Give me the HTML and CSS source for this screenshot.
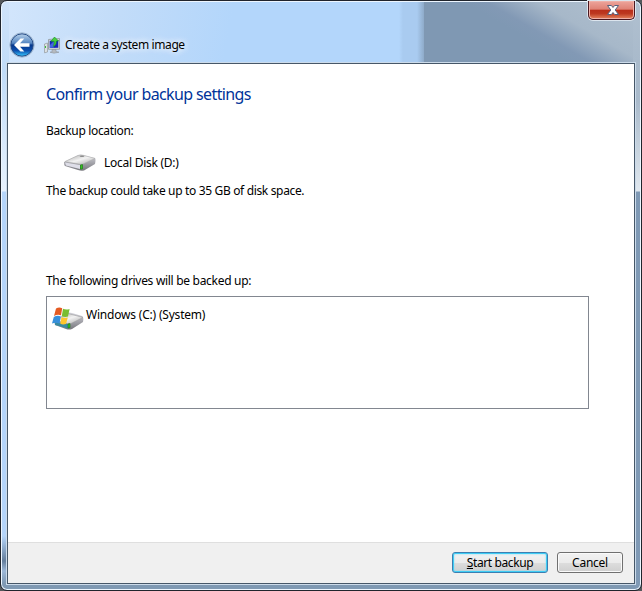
FILE: index.html
```html
<!DOCTYPE html>
<html lang="en">
<head>
<meta charset="utf-8">
<title>Create a system image</title>
<link rel="stylesheet" href="styles.css">
</head>
<body>
<div class="window">
  <header class="titlebar">
    <button class="close" aria-label="Close">
      <svg width="14" height="12" viewBox="0 0 14 12"><path d="M1.500 1.500h3.900L7 3.500l1.600-2h3.900L9.200 6l3.300 4.500H8.600L7 8.500l-1.600 2H1.500L4.800 6z" fill="#fff" stroke="#56607c"/></svg>
    </button>
    <div class="nav">
      <svg class="back" width="26" height="26" viewBox="0 0 26 26">
        <defs>
          <linearGradient id="orb" x1="0" y1="0" x2="0" y2="1"><stop offset="0" stop-color="#b5cfe9"/><stop offset=".42" stop-color="#5586c2"/><stop offset=".5" stop-color="#06378b"/><stop offset=".75" stop-color="#0c4fae"/><stop offset="1" stop-color="#38caff"/></linearGradient>
        </defs>
        <circle cx="13" cy="13" r="12.200" fill="#e9f4ff" stroke="#7f9dbd" stroke-width=".7"/>
        <circle cx="13" cy="13" r="11.200" fill="url(#orb)" stroke="#274d88" stroke-width="1"/>
        <path d="M5 13l6.500-6.500h3.800L11 11.300h9.500v3.400H11l4.300 4.800h-3.800z" fill="#fff"/>
      </svg>
      <svg class="app" width="17" height="17" viewBox="0 0 17 17">
        <path d="M.5 7l3-1v9l-3 .8z" fill="#dce0e2" stroke="#92999e" stroke-width=".7"/>
        <path d="M1.500 9v2" stroke="#38bd39"/>
        <path d="M4.500 2.500L15.500 1.500V12.300L4.500 12.300z" fill="#d5dadd" stroke="#8d9599" stroke-width=".8"/>
        <path d="M5.700 3.800L14.300 3v7.800L5.700 11z" fill="#1725b8"/>
        <path d="M6 8l4-4v6.500l-4 .4z" fill="#4264df"/>
        <path d="M8 12.500h4v2l3 .7-5 1-4-1 2-.5z" fill="#b6bbc0" stroke="#858b91" stroke-width=".5"/>
        <path d="M10.500 0l4 4h-2.200c0 3-.7 4.600-3 5.500 1-2 .9-3.500.8-5.200H7z" fill="#46cf3e" stroke="#168f21" stroke-width=".6"/>
      </svg>
      <h1>Create a system image</h1>
    </div>
  </header>
  <main class="page">
    <section class="content">
      <h2>Confirm your backup settings</h2>
      <p class="label">Backup location:</p>
      <div class="location">
        <svg width="32" height="18" viewBox="0 0 32 18">
          <defs><linearGradient id="top" x1="0" y1="0" x2="1" y2="1"><stop offset="0" stop-color="#a5a5a5"/><stop offset=".5" stop-color="#f2f2f2"/><stop offset="1" stop-color="#aaa"/></linearGradient>
          <linearGradient id="side" x1="0" y1="0" x2="0" y2="1"><stop offset="0" stop-color="#d5d5dc"/><stop offset="1" stop-color="#77777d"/></linearGradient></defs>
          <path d="M0 8L14 1Q16 0 19 1L31 4Q32 5 31 10L20 16.500Q17 17 14 16L1 12Q0 11 0 8z" fill="url(#side)"/>
          <path d="M1 7.500L14 1.500Q17 .6 20 1.400L31 4.500 19 10Q17 10.500 15 10z" fill="url(#top)" stroke="#aaa" stroke-width=".5"/>
          <path d="M1 8.500L16 11v4L2 11.500z" fill="#dedee8"/>
          <ellipse cx="18" cy="2.200" rx="2.400" ry=".7" fill="#888"/>
          <path d="M16.500 11l2-.4v4.200l-2 .4z" fill="#35c41f" stroke="#167610" stroke-width=".6"/>
        </svg>
        <span>Local Disk (D:)</span>
      </div>
      <p class="size">The backup could take up to 35 GB of disk space.</p>
      <p class="label drives-label">The following drives will be backed up:</p>
      <div class="drives">
        <svg width="32" height="24" viewBox="0 0 32 24">
          <path d="M2 14L15 6Q17 5 20 6L30 9Q32 10 31 15L20 22Q17 23 14 22L3 18z" fill="url(#side)"/>
          <path d="M3 13L16 6.500 31 10.500 19 16.500 15 16.500z" fill="url(#top)" stroke="#999" stroke-width=".5"/>
          <path d="M3 15l13 2v4.500L3 18z" fill="#398aa1"/>
          <path d="M16 17l2-.4v4l-2 .5z" fill="#35c41f" stroke="#167610" stroke-width=".6"/>
          <path d="M4 1.500Q7-.4 10.200 1.200L9 8.300Q5.500 7 2 9z" fill="#e45b22"/>
          <path d="M11 1.700Q14 3.200 17.600 2L16 9.500Q12.500 10.500 9.800 8.900z" fill="#79bd30"/>
          <path d="M1.800 10Q5.500 8 8.800 9.500L7.500 16.500Q4 15 0 16.500z" fill="#368fdb"/>
          <path d="M9.600 9.900Q12.500 11.500 15.800 10.500L14 17Q11 18 8.300 16.800z" fill="#ffc62c"/>
        </svg>
        <span>Windows (C:) (System)</span>
      </div>
    </section>
    <footer>
      <button class="btn primary"><u>S</u>tart backup</button>
      <button class="btn cancel">Cancel</button>
    </footer>
  </main>
</div>
</body>
</html>
```
FILE: styles.css
```css
* { box-sizing: border-box; }
body { margin: 0; width: 642px; height: 591px; overflow: hidden; background: #55585b; font: 12px/16px "Noto Sans", "Open Sans", sans-serif; letter-spacing: -.34px; color: #000; }
svg { display: block; flex: none; }
h1, h2, p { margin: 0; font-weight: 400; white-space: nowrap; }
.window { width: 642px; height: 591px; padding: 0 6px 6px; display: flex; flex-direction: column; border: 1px solid #20242c; border-radius: 7px; box-shadow: inset 0 0 0 1px #edf6ff;
  background:
    linear-gradient(#7f99b3, #7f99b3) 50% 100% / 626px 8px no-repeat,
    linear-gradient(#b0c0d0, #a9bacb 60px, #a9bacb 100px, #e0e8ef 190px, #7f99b5 191px) 100% 0 / 8px 100% no-repeat,
    linear-gradient(#cfe3fa, #c1dcf8 70px, #e7f2fe 190px, #b5d5fa 191px, #b5d5fa 535px, #647e9c 560px, #9db8d8 570px, #7f99b3 582px) 0 0 / 8px 100% no-repeat,
    linear-gradient(30deg, #7f98b3 45%, #8299b5 52%, #a7b8c9 68%, #b0c0d0) 100% 0 / 217px 63px no-repeat,
    linear-gradient(90deg, transparent 398px, #a9cbf0 402px, #a9cbf0 416px, #7f98b3 427px),
    linear-gradient(100deg, #d3e6fc, #c2dcf9 120px, #b3d6fb 230px, #b3d6fb); }
.titlebar { height: 62px; position: relative; padding: 31px 0 0 2px; }
.close { position: absolute; right: 0; top: 0; width: 47px; height: 19px; padding: 0 0 1px 2px; display: grid; place-items: center; border: 1px solid #4a1720; border-top: 0; border-radius: 0 0 5px 5px; background: linear-gradient(#eda59c, #df8175 46%, #b92e1a 50%, #bd3820 70%, #e5855f); box-shadow: inset 0 0 0 1px #efb0a8, 0 0 0 1px #dce5ee; }
.nav { display: flex; align-items: center; height: 26px; }
.app { margin-left: 9px; }
h1 { margin-left: 4px; font-size: 12px; line-height: 16px; letter-spacing: -.4px; text-shadow: 0 0 7px #fff, 0 0 7px #fff; }
.page { flex: 1; display: flex; flex-direction: column; border: 1px solid #465768; background: #fff; box-shadow: 0 0 0 1px #ccdbea; }
.content { flex: 1; padding: 19px 45px 0 38px; display: flex; flex-direction: column; }
h2 { font-size: 16px; line-height: 22px; color: #039; letter-spacing: -.62px; }
.label { margin-top: 18px; }
.location { display: flex; align-items: center; gap: 8px; height: 20px; margin: 14px 0 0 18px; letter-spacing: -.27px; }
.size { margin-top: 10px; }
.drives-label { margin-top: 74px; letter-spacing: -.3px; }
.drives { width: 543px; height: 113px; margin-top: 7px; padding: 10px 5px; display: flex; align-items: flex-start; gap: 2px; border: 1px solid #828790; letter-spacing: -.2px; }
footer { height: 41px; border-top: 1px solid #dfdfdf; background: #f0f0f0; display: flex; justify-content: flex-end; padding: 9px 11px 0 0; gap: 9px; }
.btn { height: 21px; padding: 0; border: 1px solid #707070; border-radius: 3px; background: linear-gradient(#f2f2f2, #ebebeb 50%, #ddd 51%, #cfcfcf); box-shadow: inset 0 0 0 1px #fafafa; font: inherit; line-height: 17px; color: #000; letter-spacing: -.25px; }
.primary { width: 96px; border-color: #3c7fb1; letter-spacing: -.4px; box-shadow: inset 0 0 0 1px #3fcdf5, inset 0 0 2px 1px #83def8; }
.cancel { width: 66px; }
```
